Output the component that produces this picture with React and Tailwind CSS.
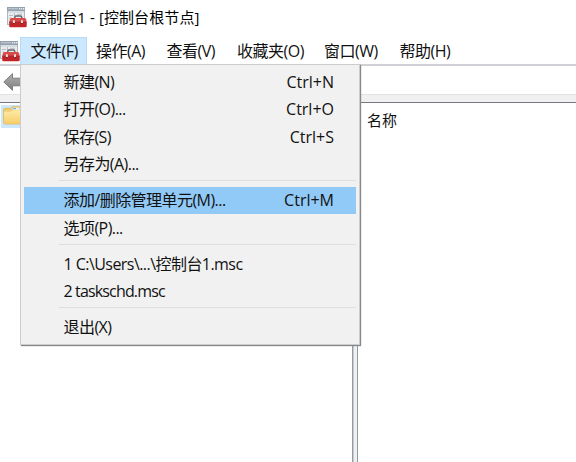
const LATIN = 'font-["Open_Sans","Noto_Sans_CJK_SC",sans-serif]';

function Toolbox({ className }) {
  return (
    <svg className={className} width="20" height="21" viewBox="0 0 20 21">
      <rect x="0.5" y="0.5" width="17" height="17" fill="#e9edf0" stroke="#b0b6bc" />
      <rect x="0" y="0" width="18" height="4" fill="#95a0ad" />
      <rect x="1" y="1" width="10" height="1.4" fill="#b7c2cf" />
      <path d="M12 1h1.3v1.5H12zM14 1h1.3v1.5H14zM16 1h1.3v1.5H16z" fill="#e7edf3" />
      <rect x="1" y="4.2" width="16" height="1.6" fill="#d2dae0" />
      <path d="M2 8.5h4M2 11h2M7.5 6v3M10 7.3h5" stroke="#b4bdc6" />
      <path d="M7.8 12V10.2Q7.8 9 9 9h4.5q1.2 0 1.2 1.2V12" fill="none" stroke="#66636a" strokeWidth="1.5" />
      <path d="M4.5 11h13q1.5 0 1.8 1.7l.4 3H2.3l.5-3q.3-1.7 1.7-1.7z" fill="#d94b4b" />
      <path d="M2.2 15h17.5v3.9q0 1.4-1.4 1.4H3.6q-1.4 0-1.4-1.4z" fill="#c22529" />
      <path d="M2.3 15h17.3" stroke="#9b2a2e" strokeWidth=".7" />
      <path d="M5.9 13.3h2v3.1h-2zM14 13.3h2v3.1h-2z" fill="#f0dad8" />
      <path d="M6 16h1.8v1H6zM14.1 16h1.8v1h-1.8z" fill="#6d1d23" />
    </svg>
  );
}

function BackArrow() {
  return (
    <svg className="ml-[3px] mt-[3px] shrink-0" width="24" height="20" viewBox="0 0 24 20">
      <defs>
        <linearGradient id="arrow" x1="0" y1="0" x2="0" y2="1">
          <stop offset="0" stopColor="#b2b2b2" />
          <stop offset="1" stopColor="#7c7c7c" />
        </linearGradient>
      </defs>
      <path d="M.8 10 9.5 1.7v4.500H23v7.600H9.500v4.500z" fill="url(#arrow)" stroke="#7c7c7c" strokeLinejoin="round" />
    </svg>
  );
}

function Folder() {
  return (
    <svg className="ml-[2px] block" width="22" height="21" viewBox="0 -1 22 21">
      <defs>
        <linearGradient id="folder" x1="0" y1="0" x2="0" y2="1">
          <stop offset="0" stopColor="#ffeaa5" />
          <stop offset="1" stopColor="#f5cf6b" />
        </linearGradient>
      </defs>
      <path d="M.6 3.5Q.6 2.3 1.8 2.3h6L9.2.7h8l1 2H22V18H2Q.6 18 .6 16.5z" fill="#efcd72" stroke="#d9b45a" strokeWidth=".8" />
      <rect x="9.5" y="1.5" width="7" height="2.6" rx="1" fill="#e8f0ee" />
      <rect x="10" y="1.8" width="3" height="1.5" fill="#83b3d2" />
      <path d="M1 5.7h7l1.7-1.5H22v13.3H2.2Q1 17.5 1 16.4z" fill="url(#folder)" />
    </svg>
  );
}

function Item({ label, shortcut, active, tracking = "tracking-[-0.55px]" }) {
  return (
    <div className={`mx-[3px] flex h-[27.5px] items-center justify-between pl-[39.5px] pr-[22px] ${active ? "bg-[#91c9f7]" : ""}`}>
      <span className={tracking}>{label}</span>
      {shortcut && <span className="tracking-[0px]">{shortcut}</span>}
    </div>
  );
}

function Separator() {
  return (
    <div className="ml-[38px] mr-[3px] flex h-[8.5px] items-start pt-[2px]">
      <div className="h-px w-full bg-[#dedede]" />
    </div>
  );
}

function FileMenu() {
  return (
    <div className="absolute left-[20px] top-[64px] h-[281px] w-[340px] border border-[#cccccc] bg-[#f1f1f1] pt-[3px] shadow-[1px_1px_1px_#888]">
      <Item label="新建(N)" shortcut="Ctrl+N" />
      <Item label="打开(O)..." shortcut="Ctrl+O" />
      <Item label="保存(S)" shortcut="Ctrl+S" />
      <Item label="另存为(A)..." />
      <Separator />
      <Item label="添加/删除管理单元(M)..." shortcut="Ctrl+M" active />
      <Item label="选项(P)..." />
      <Separator />
      <Item label="1 C:\Users\...\控制台1.msc" />
      <Item label="2 taskschd.msc" tracking="tracking-[-0.85px]" />
      <Separator />
      <Item label="退出(X)" />
    </div>
  );
}

export default function App() {
  return (
    <div className={`relative flex h-[462px] w-[576px] flex-col overflow-hidden whitespace-nowrap bg-white text-[16px] leading-[20px] text-[#111] ${LATIN}`}>
      <header className="flex h-[37px] shrink-0 items-start pl-[7px] pt-[7px]">
        <Toolbox />
        <h1 className="ml-[5px] text-[15px] tracking-[0.1px] text-black">控制台1 - [控制台根节点]</h1>
      </header>
      <nav className="flex h-[27px] shrink-0 items-center tracking-[-0.5px]">
        <div className="h-[20px] w-[20px] shrink-0"><Toolbox /></div>
        <span className="flex h-[27px] w-[67px] items-center border border-b-0 border-[#b5dcfa] bg-[#cce8ff] pl-[9.5px]">文件(F)</span>
        <span className="ml-[9px] w-[70.5px]">操作(A)</span>
        <span className="w-[70.5px]">查看(V)</span>
        <span className="w-[87px]">收藏夹(O)</span>
        <span className="w-[75.5px]">窗口(W)</span>
        <span>帮助(H)</span>
      </nav>
      <div className="flex h-[30px] shrink-0 items-center border-t-2 border-[#d0d0d6]">
        <BackArrow />
      </div>
      <div className="h-[8px] shrink-0 border-t border-[#e3e3e3] bg-[#f0f0f0]" />
      <main className="flex flex-1 border-t border-[#77777f]">
        <aside className="w-[353px] border-r border-[#929aa5] pt-[2px]">
          <div className="ml-px h-[23px] w-[150px] bg-[#cce8ff]"><Folder /></div>
        </aside>
        <div className="w-[4px] border-l border-[#c7ccd2] bg-[#f0f0f0]" />
        <section className="flex-1 border-l border-[#929aa5] pl-[9px] pt-[7px] text-[15px]">名称</section>
      </main>
      <FileMenu />
    </div>
  );
}
